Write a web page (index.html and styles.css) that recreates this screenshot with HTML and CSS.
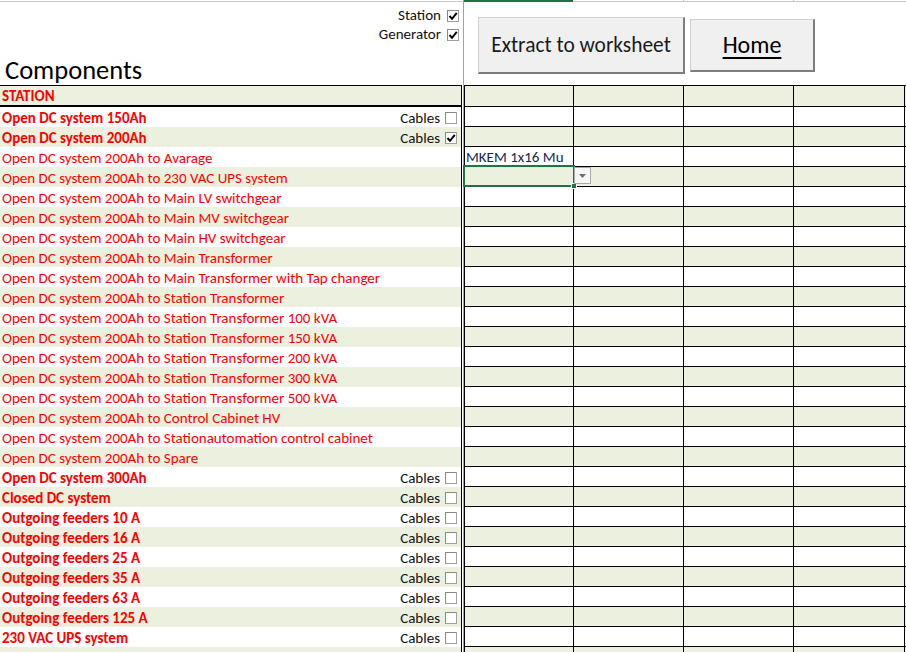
FILE: index.html
```html
<!DOCTYPE html>
<html>
<head>
<meta charset="utf-8">
<link rel="stylesheet" href="styles.css">
</head>
<body>
<div class="sheet">
  <div class="left">
    <div class="topline"></div>
    <div class="lhead">
      <div class="opts">
        <div class="opt">Station <span class="cb on"><svg viewBox="0 0 10 10"><polyline points="1.5,5 4,7.8 8.8,1.8"/></svg></span></div>
        <div class="opt">Generator <span class="cb on"><svg viewBox="0 0 10 10"><polyline points="1.5,5 4,7.8 8.8,1.8"/></svg></span></div>
      </div>
      <div class="title">Components</div>
    </div>
    <div class="lrows">
      <div class="lrow station g"><span class="lbl b">STATION</span></div>
      <div class="lrow"><span class="lbl b">Open DC system 150Ah</span><span class="cab">Cables<span class="cb"></span></span></div>
      <div class="lrow g"><span class="lbl b">Open DC system 200Ah</span><span class="cab">Cables<span class="cb on"><svg viewBox="0 0 10 10"><polyline points="1.5,5 4,7.8 8.8,1.8"/></svg></span></span></div>
      <div class="lrow"><span class="lbl">Open DC system 200Ah to Avarage</span></div>
      <div class="lrow g"><span class="lbl">Open DC system 200Ah to 230 VAC UPS system</span></div>
      <div class="lrow"><span class="lbl">Open DC system 200Ah to Main LV switchgear</span></div>
      <div class="lrow g"><span class="lbl">Open DC system 200Ah to Main MV switchgear</span></div>
      <div class="lrow"><span class="lbl">Open DC system 200Ah to Main HV switchgear</span></div>
      <div class="lrow g"><span class="lbl">Open DC system 200Ah to Main Transformer</span></div>
      <div class="lrow"><span class="lbl">Open DC system 200Ah to Main Transformer with Tap changer</span></div>
      <div class="lrow g"><span class="lbl">Open DC system 200Ah to Station Transformer</span></div>
      <div class="lrow"><span class="lbl">Open DC system 200Ah to Station Transformer 100 kVA</span></div>
      <div class="lrow g"><span class="lbl">Open DC system 200Ah to Station Transformer 150 kVA</span></div>
      <div class="lrow"><span class="lbl">Open DC system 200Ah to Station Transformer 200 kVA</span></div>
      <div class="lrow g"><span class="lbl">Open DC system 200Ah to Station Transformer 300 kVA</span></div>
      <div class="lrow"><span class="lbl">Open DC system 200Ah to Station Transformer 500 kVA</span></div>
      <div class="lrow g"><span class="lbl">Open DC system 200Ah to Control Cabinet HV</span></div>
      <div class="lrow"><span class="lbl">Open DC system 200Ah to Stationautomation control cabinet</span></div>
      <div class="lrow g"><span class="lbl">Open DC system 200Ah to Spare</span></div>
      <div class="lrow"><span class="lbl b">Open DC system 300Ah</span><span class="cab">Cables<span class="cb"></span></span></div>
      <div class="lrow g"><span class="lbl b">Closed DC system</span><span class="cab">Cables<span class="cb"></span></span></div>
      <div class="lrow"><span class="lbl b">Outgoing feeders 10 A</span><span class="cab">Cables<span class="cb"></span></span></div>
      <div class="lrow g"><span class="lbl b">Outgoing feeders 16 A</span><span class="cab">Cables<span class="cb"></span></span></div>
      <div class="lrow"><span class="lbl b">Outgoing feeders 25 A</span><span class="cab">Cables<span class="cb"></span></span></div>
      <div class="lrow g"><span class="lbl b">Outgoing feeders 35 A</span><span class="cab">Cables<span class="cb"></span></span></div>
      <div class="lrow"><span class="lbl b">Outgoing feeders 63 A</span><span class="cab">Cables<span class="cb"></span></span></div>
      <div class="lrow g"><span class="lbl b">Outgoing feeders 125 A</span><span class="cab">Cables<span class="cb"></span></span></div>
      <div class="lrow"><span class="lbl b">230 VAC UPS system</span><span class="cab">Cables<span class="cb"></span></span></div>
      <div class="lrow g"></div>
    </div>
  </div>
  <div class="right">
    <div class="colhdr"><span class="sel"></span><span></span><span class="tick"></span><span class="tick"></span><span></span></div>
    <div class="rhead">
      <button class="btn ext">Extract to worksheet</button>
      <button class="btn home">Home</button>
    </div>
    <div class="grid">
      <div class="rrow station g"><span></span><span></span><span></span><span></span><span></span></div>
      <div class="rrow"><span></span><span></span><span></span><span></span><span></span></div>
      <div class="rrow g"><span></span><span></span><span></span><span></span><span></span></div>
      <div class="rrow"><span class="txt">MKEM 1x16 Mu</span><span></span><span></span><span></span><span></span></div>
      <div class="rrow g"><span class="active"><i class="selbox"></i><i class="handle"></i><i class="dd"><svg viewBox="0 0 7 4"><polygon points="0,0 7,0 3.5,4"/></svg></i></span><span></span><span></span><span></span><span></span></div>
      <div class="rrow"><span></span><span></span><span></span><span></span><span></span></div>
      <div class="rrow g"><span></span><span></span><span></span><span></span><span></span></div>
      <div class="rrow"><span></span><span></span><span></span><span></span><span></span></div>
      <div class="rrow g"><span></span><span></span><span></span><span></span><span></span></div>
      <div class="rrow"><span></span><span></span><span></span><span></span><span></span></div>
      <div class="rrow g"><span></span><span></span><span></span><span></span><span></span></div>
      <div class="rrow"><span></span><span></span><span></span><span></span><span></span></div>
      <div class="rrow g"><span></span><span></span><span></span><span></span><span></span></div>
      <div class="rrow"><span></span><span></span><span></span><span></span><span></span></div>
      <div class="rrow g"><span></span><span></span><span></span><span></span><span></span></div>
      <div class="rrow"><span></span><span></span><span></span><span></span><span></span></div>
      <div class="rrow g"><span></span><span></span><span></span><span></span><span></span></div>
      <div class="rrow"><span></span><span></span><span></span><span></span><span></span></div>
      <div class="rrow g"><span></span><span></span><span></span><span></span><span></span></div>
      <div class="rrow"><span></span><span></span><span></span><span></span><span></span></div>
      <div class="rrow g"><span></span><span></span><span></span><span></span><span></span></div>
      <div class="rrow"><span></span><span></span><span></span><span></span><span></span></div>
      <div class="rrow g"><span></span><span></span><span></span><span></span><span></span></div>
      <div class="rrow"><span></span><span></span><span></span><span></span><span></span></div>
      <div class="rrow g"><span></span><span></span><span></span><span></span><span></span></div>
      <div class="rrow"><span></span><span></span><span></span><span></span><span></span></div>
      <div class="rrow g"><span></span><span></span><span></span><span></span><span></span></div>
      <div class="rrow"><span></span><span></span><span></span><span></span><span></span></div>
      <div class="rrow g"><span></span><span></span><span></span><span></span><span></span></div>
    </div>
  </div>
</div>
</body>
</html>
```
FILE: styles.css
```css
html, body {
  margin: 0;
  padding: 0;
  background: #ffffff;
  height: 652px;
  overflow: hidden;
}
body {
  font-family: Carlito, Calibri, Lato, "Open Sans", sans-serif;
  font-size: 15px;
  color: #000;
}
.sheet {
  display: flex;
  width: 906px;
}
.left {
  width: 463px;
  flex: none;
  border-right: 1px solid #a3a3a3;
}
.topline {
  margin-top: 1px;
  height: 1px;
  background: #c8c8c8;
}
.lhead {
  height: 83px;
  box-sizing: border-box;
  padding-top: 4px;
}
.opts {
  display: flex;
  flex-direction: column;
  align-items: flex-end;
  padding-right: 4px;
}
.opt {
  height: 19px;
  line-height: 19px;
  display: flex;
  align-items: center;
  gap: 6px;
  color: #111;
}
.title {
  margin-top: 11px;
  padding-left: 5px;
  font-size: 26.5px;
  line-height: 30px;
  color: #000;
}
.cb {
  width: 12px;
  height: 12px;
  box-sizing: border-box;
  border: 1px solid #a0a0a0;
  border-top-color: #8a8a8a;
  border-left-color: #8a8a8a;
  background: #fff;
  display: inline-flex;
  align-items: center;
  justify-content: center;
}
.cb svg {
  width: 10px;
  height: 10px;
}
.cb polyline {
  fill: none;
  stroke: #000;
  stroke-width: 2;
}
.lrow {
  width: 462px;
  box-sizing: border-box;
  height: 20px;
  border-right: 1px solid #000;
  display: flex;
  align-items: center;
  justify-content: space-between;
  line-height: 20px;
}
.lrow.g { background: #ebf1de; }
.lrow.station {
  height: 22px;
  border-top: 1px solid #000;
  border-bottom: 2px solid #000;
}
.lbl {
  padding-left: 2px;
  padding-top: 1px;
  color: #ff0000;
  white-space: nowrap;
}
.lbl.b { font-weight: bold; }
.cab {
  display: flex;
  align-items: center;
  gap: 5px;
  padding-right: 4px;
  padding-top: 1px;
  color: #111;
}
.right {
  flex: 1;
  min-width: 0;
}
.colhdr {
  height: 2px;
  display: grid;
  grid-template-columns: 109px 110px 110px 111px 1fr;
}
.colhdr span {
  box-sizing: border-box;
  border-bottom: 1px solid #c8c8c8;
}
.colhdr span.tick { border-left: 1px solid #c8c8c8; }
.colhdr span.sel {
  background: #217346;
  border-bottom: none;
}
.rhead {
  height: 83px;
  box-sizing: border-box;
  padding: 3px 0 0 14px;
  display: flex;
  align-items: center;
  gap: 5px;
}
.btn {
  font-family: Carlito, Calibri, Lato, "Open Sans", sans-serif;
  background: #f0f0f0;
  border: 1px solid #cfcfcf;
  border-right: 2px solid #7d7d7d;
  border-bottom: 2px solid #7d7d7d;
  color: #1a1a1a;
  padding: 0;
  margin: 0;
  box-sizing: border-box;
}
.btn.ext {
  width: 207px;
  height: 57px;
  font-size: 21.4px;
}
.btn.home {
  width: 125px;
  height: 53px;
  font-size: 24px;
  text-decoration: underline;
  text-underline-offset: 4px;
  text-decoration-thickness: 2px;
  color: #000;
}
.rrow {
  display: grid;
  grid-template-columns: 109px 110px 110px 111px 1fr;
  height: 20px;
  box-sizing: border-box;
  border-bottom: 1px solid #000;
}
.rrow.station {
  height: 22px;
  border-top: 1px solid #000;
}
.rrow.g { background: #ebf1de; }
.rrow > span {
  box-sizing: border-box;
  border-left: 1px solid #000;
  line-height: 19px;
  white-space: nowrap;
}
.rrow > span.txt {
  padding-left: 1px;
  padding-top: 1px;
  color: #1b2550;
}
.active {
  position: relative;
}
.selbox {
  position: absolute;
  left: -2px;
  top: -2px;
  width: 112px;
  height: 22px;
  box-sizing: border-box;
  border: 2px solid #217346;
}
.handle {
  position: absolute;
  left: 106px;
  top: 16px;
  width: 6px;
  height: 6px;
  box-sizing: border-box;
  background: #217346;
  border: 1px solid #fff;
}
.dd {
  position: absolute;
  left: 109px;
  top: 0px;
  width: 17px;
  height: 17px;
  box-sizing: border-box;
  border: 1px solid #a9a9a9;
  background: #f7f7f7;
  display: flex;
  align-items: center;
  justify-content: center;
  z-index: 2;
}
.dd svg {
  width: 7px;
  height: 4px;
}
.dd polygon { fill: #6e6e6e; }
```
